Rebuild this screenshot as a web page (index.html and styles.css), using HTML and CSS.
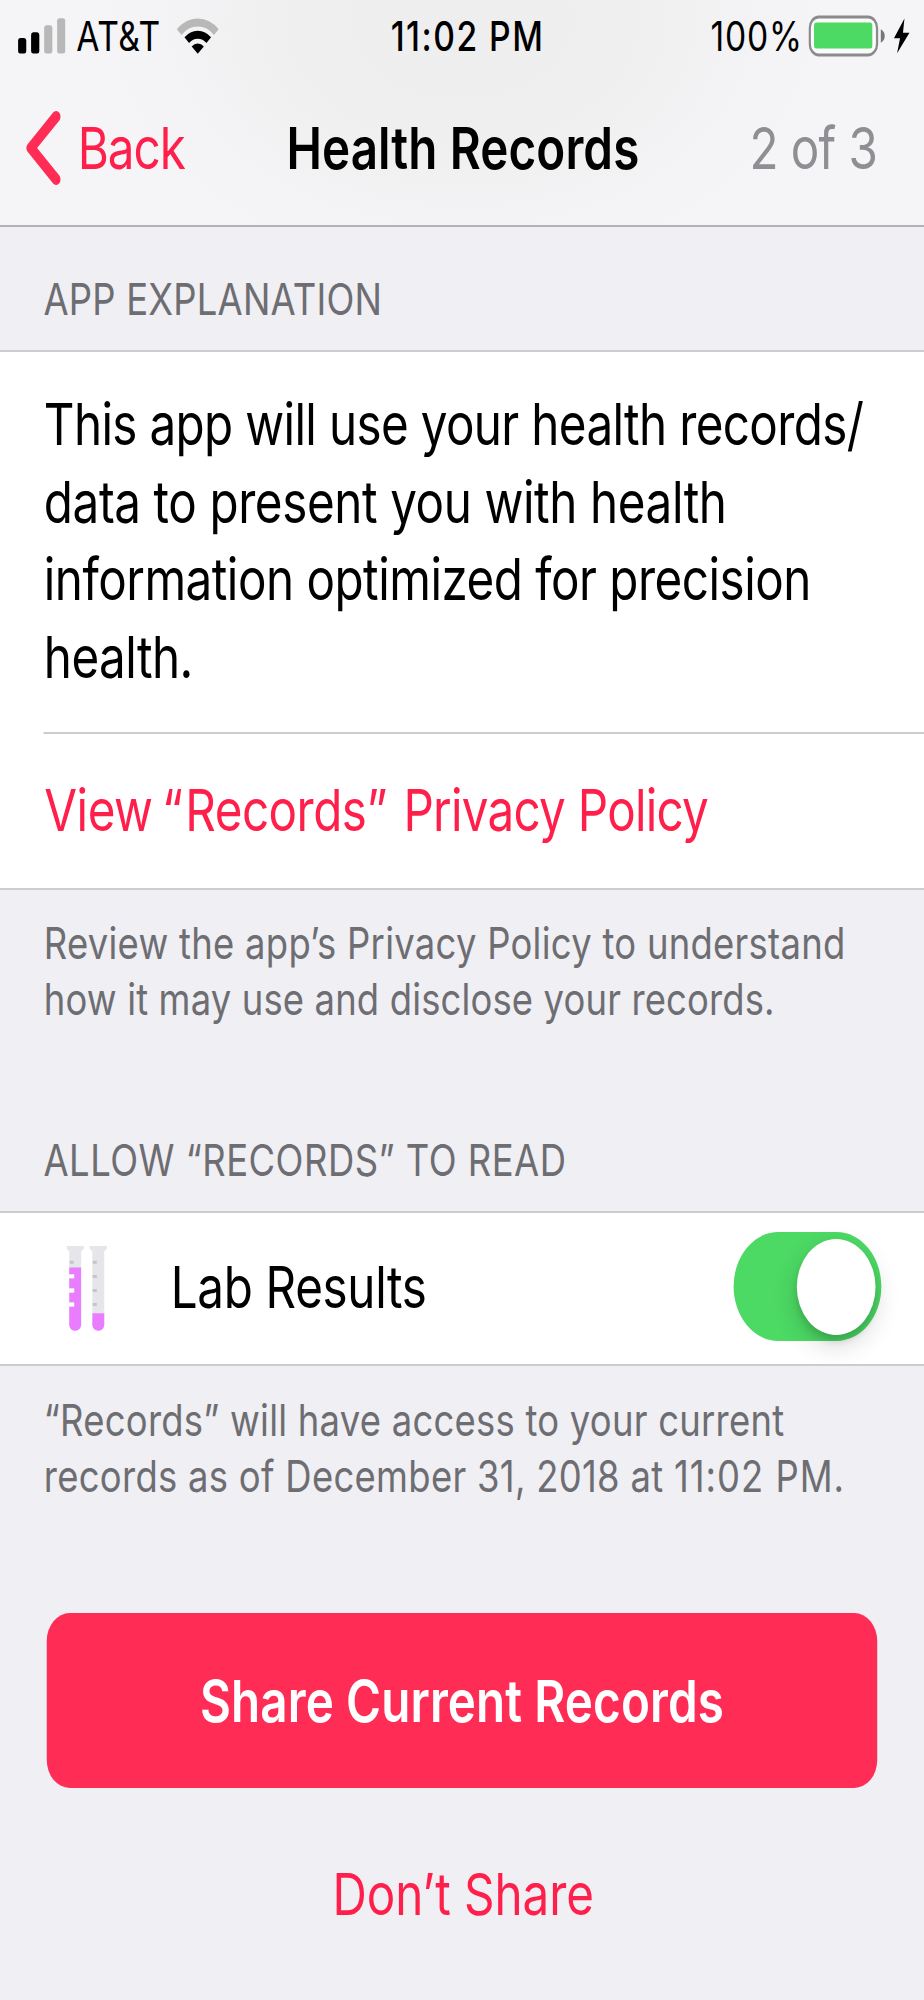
FILE: index.html
```html
<!DOCTYPE html>
<html lang="en">
<head>
<meta charset="utf-8">
<title>Health Records</title>
<link rel="stylesheet" href="styles.css">
</head>
<body>
<div class="screen">
  <header class="header">
    <div class="status">
      <div class="status-left">
        <svg class="signal" viewBox="0 0 58 36" aria-hidden="true">
          <rect x="0" y="20" width="10" height="15.5" rx="2.6"/>
          <rect x="15.9" y="14.3" width="10" height="21.2" rx="2.6"/>
          <rect class="dim" x="31.8" y="7.3" width="10" height="28.2" rx="2.6"/>
          <rect class="dim" x="47.6" y="0.2" width="10" height="35.3" rx="2.6"/>
        </svg>
        <span class="carrier">AT&amp;T</span>
        <svg class="wifi" viewBox="-26 -36 52 36" aria-hidden="true">
          <path class="arc dim" d="M-22.6 -21.9A31.4 31.4 0 0 1 22.6 -21.9"/>
          <path class="arc" d="M-13.4 -13.8A19.2 19.2 0 0 1 13.4 -13.8"/>
          <path d="M0 -.2L-7.4 -7.6A10.8 10.8 0 0 1 7.4 -7.6Z"/>
        </svg>
      </div>
      <span class="clock">11:02 PM</span>
      <div class="status-right">
        <span class="percent">100%</span>
        <svg class="battery" viewBox="0 0 94 42" aria-hidden="true">
          <rect class="shell" x="1.8" y="2" width="82" height="38" rx="11"/>
          <rect class="charge" x="7" y="7.4" width="71" height="26.2" rx="2.5"/>
          <path class="tip" d="M88.4 14.2C91.4 15.6 93.2 18 93.2 21S91.4 26.4 88.4 27.8Z"/>
        </svg>
        <svg class="bolt" viewBox="0 0 20 36" aria-hidden="true">
          <path d="M13.2 .6L.4 20.2H7.8L4.2 35.2L19.3 14.8H11.4Z"/>
        </svg>
      </div>
    </div>
    <nav class="nav">
      <a class="back">
        <svg class="chevron" viewBox="0 0 43 74" aria-hidden="true"><path d="M37.4 5.6L6.6 37L37.4 68.4"/></svg>
        <span>Back</span>
      </a>
      <h1 class="title">Health Records</h1>
      <span class="step">2 of 3</span>
    </nav>
  </header>

  <h2 class="section-title section-title-first">APP EXPLANATION</h2>
  <section class="group">
    <p class="explanation">
      <span class="line l1">This app will use your health records/</span>
      <span class="line l2">data to present you with health</span>
      <span class="line l3">information optimized for precision</span>
      <span class="line l4">health.</span>
    </p>
    <a class="policy"><span>View <span class="open-quote">“</span>Records<span class="close-quote">”</span> <span class="policy-end">Privacy Policy</span></span></a>
  </section>
  <p class="note">
    <span class="line n1">Review the app’s Privacy Policy to understand</span>
    <span class="line n2">how it may use and disclose your records.</span>
  </p>

  <h2 class="section-title section-title-allow">ALLOW “RECORDS” TO READ</h2>
  <section class="group lab">
    <svg class="tubes" viewBox="0 0 41 85" preserveAspectRatio="none" aria-hidden="true">
      <path class="glass" d="M0 0H17.4V2.6L14.7 5.4V78.5C14.7 82 12 84.7 8.7 84.7S2.8 82 2.8 78.5V5.4L0 2.6Z"/>
      <path class="glass" d="M23.2 0H40.7V2.6L37.9 5.4V78.5C37.9 82 35.3 84.7 32 84.7S26 82 26 78.5V5.4L23.2 2.6Z"/>
      <path class="fluid" d="M2.8 21.4H14.7V78.5C14.7 82 12 84.7 8.7 84.7S2.8 82 2.8 78.5V60.4H7.7V56.6H2.8V46.4H7.7V42.5H2.8V32.3H7.7V28.4H2.8Z"/>
      <path class="fluid" d="M26 67.3H37.9V78.5C37.9 82 35.3 84.7 32 84.7S26 82 26 78.5Z"/>
      <path class="notch" d="M2.8 30.4H7.7M2.8 44.5H7.7M2.8 58.5H7.7"/>
      <path class="tick" d="M3.2 16.3H7.3M26.3 16.3H30.4M26.3 30.4H30.4M26.3 44.5H30.4M26.3 58.5H30.4"/>
    </svg>
    <span class="lab-name">Lab Results</span>
    <span class="toggle"><span class="knob"></span></span>
  </section>
  <p class="note note-access">
    <span class="line n3">“Records” will have access to your current</span>
    <span class="line n4">records as of December 31, 2018 at <span class="time">11:02 PM.</span></span>
  </p>

  <button class="share">Share Current Records</button>
  <a class="decline">Don’t Share</a>
</div>
</body>
</html>
```
FILE: styles.css
```css
* { box-sizing: border-box; }

html, body {
  margin: 0;
  width: 924px;
  height: 2000px;
  overflow: hidden;
  background: #efeff4;
}

/* Condensed horizontally: 1126px of layout span the 924px window. */
.screen {
  width: 1126px;
  height: 2000px;
  transform: scaleX(0.8206);
  transform-origin: 0 0;
  background: #efeff4;
  color: #000;
  font-family: Inter, "Liberation Sans", sans-serif;
  font-size: 58px;
  line-height: 78px;
}

.header {
  height: 227px;
  border-bottom: 2px solid #b2b2b5;
  background: radial-gradient(ellipse 430px 250px at 50% 20px, #eeeeef 0%, #efeff0 45%, #f5f5f7 100%);
}

.status {
  display: grid;
  grid-template-columns: 1fr auto 1fr;
  align-items: center;
  height: 72px;
  padding: 0 17.2px 0 21.6px;
  font-size: 41px;
  line-height: 50px;
}
.status-left, .status-right { display: flex; align-items: center; }
.status-right { justify-content: flex-end; }
.signal { width: 58px; height: 36px; }
.carrier { margin-left: 13.3px; letter-spacing: 0.67px; }
.wifi { width: 52px; height: 36px; margin-left: 19.2px; }
.dim { fill: #b8b8b9; }
.arc { fill: none; stroke: #000; stroke-width: 8px; }
.arc.dim { stroke: #b8b8b9; }
.clock { margin-left: 9px; font-weight: 500; letter-spacing: 1.8px; }
.percent { letter-spacing: 0.89px; }
.battery { width: 94px; height: 42px; margin-left: 6.7px; }
.shell { fill: #fbfbfc; stroke: #8b8b8d; stroke-width: 2.8px; }
.charge { fill: #4cd964; }
.tip { fill: #77777a; }
.bolt { width: 20px; height: 36px; margin-left: 10px; }

.nav {
  display: grid;
  grid-template-columns: 1fr auto 1fr;
  align-items: center;
  height: 152px;
  padding: 0 57px 0 31.2px;
}
.back { display: flex; align-items: center; color: #ff1f4b; letter-spacing: -1.3px; }
.chevron {
  width: 43px;
  height: 74px;
  margin-right: 20.6px;
  fill: none;
  stroke: #ff2d55;
  stroke-width: 11px;
  stroke-linecap: round;
  stroke-linejoin: round;
}
.title { margin: 0 0 0 28px; font-size: 58px; font-weight: 600; letter-spacing: 0.12px; }
.step { justify-self: end; color: #8e8e93; letter-spacing: -0.72px; }

.section-title {
  margin: 0;
  padding: 44px 53px 23px;
  color: #6d6d72;
  font-size: 44.4px;
  font-weight: 400;
  line-height: 56px;
}
.section-title-first { letter-spacing: 0.24px; }
.section-title-allow { padding-top: 105px; letter-spacing: 0.59px; }

.group {
  border-top: 2px solid #cbcbd0;
  border-bottom: 2px solid #cbcbd0;
  background: #fff;
}
.line { display: block; white-space: nowrap; }
.explanation {
  margin: 0 0 0 53.4px;
  padding: 34px 0 36px;
  border-bottom: 2px solid #cbcbd0;
  line-height: 77.5px;
}
.l1 { letter-spacing: -0.79px; }
.l2 { letter-spacing: -0.49px; }
.l3 { letter-spacing: -0.61px; }
.l4 { letter-spacing: -0.67px; }
.policy {
  display: flex;
  align-items: center;
  height: 154px;
  padding: 0 0 2px 54px;
  color: #ff1f4b;
  letter-spacing: -0.64px;
}
.open-quote { margin: 0 3.5px 0 -4px; }
.close-quote { margin-right: 4.5px; }
.policy-end { letter-spacing: -0.9px; }

.note {
  margin: 0;
  padding: 25px 0 0 53.4px;
  color: #6d6d72;
  font-size: 44.4px;
  line-height: 56px;
}
.note-access { padding-top: 26px; }
.n1 { letter-spacing: 0.33px; }
.n2 { letter-spacing: 0.18px; }
.n3 { letter-spacing: 0.3px; }
.n4 { letter-spacing: 0.36px; }
.time { letter-spacing: 1.2px; }

.lab {
  display: flex;
  align-items: center;
  height: 155px;
  padding: 0 52.3px 0 80.9px;
}
.tubes { width: 49.8px; height: 85px; }
.glass { fill: #e5e5ea; }
.fluid { fill: #ea7cff; }
.tick { stroke: #c5c5ca; stroke-width: 3px; }
.notch { stroke: #fff; stroke-width: 3.9px; }
.lab-name { margin-left: 77.3px; padding-bottom: 4px; letter-spacing: -0.4px; }
.toggle {
  display: flex;
  align-items: center;
  justify-content: flex-end;
  width: 179.5px;
  height: 109px;
  margin: 0 0 4px auto;
  padding-right: 7px;
  border-radius: 55px;
  background: #4cd964;
}
.knob {
  width: 96px;
  height: 96px;
  border-radius: 50%;
  background: #fff;
  box-shadow: 0 10px 28px rgba(0, 0, 0, 0.16), 0 6px 8px rgba(0, 0, 0, 0.12);
}

.share {
  display: block;
  width: 1012.4px;
  height: 175px;
  margin: 109px 0 0 56.8px;
  padding: 0;
  border: 0;
  border-radius: 28px;
  background: #ff2d55;
  color: #fff;
  font: 600 58px/78px Inter, "Liberation Sans", sans-serif;
  letter-spacing: 0.12px;
}
.decline {
  display: block;
  margin-top: 67px;
  padding-left: 3px;
  color: #ff1f4b;
  text-align: center;
  letter-spacing: -0.1px;
}
```
